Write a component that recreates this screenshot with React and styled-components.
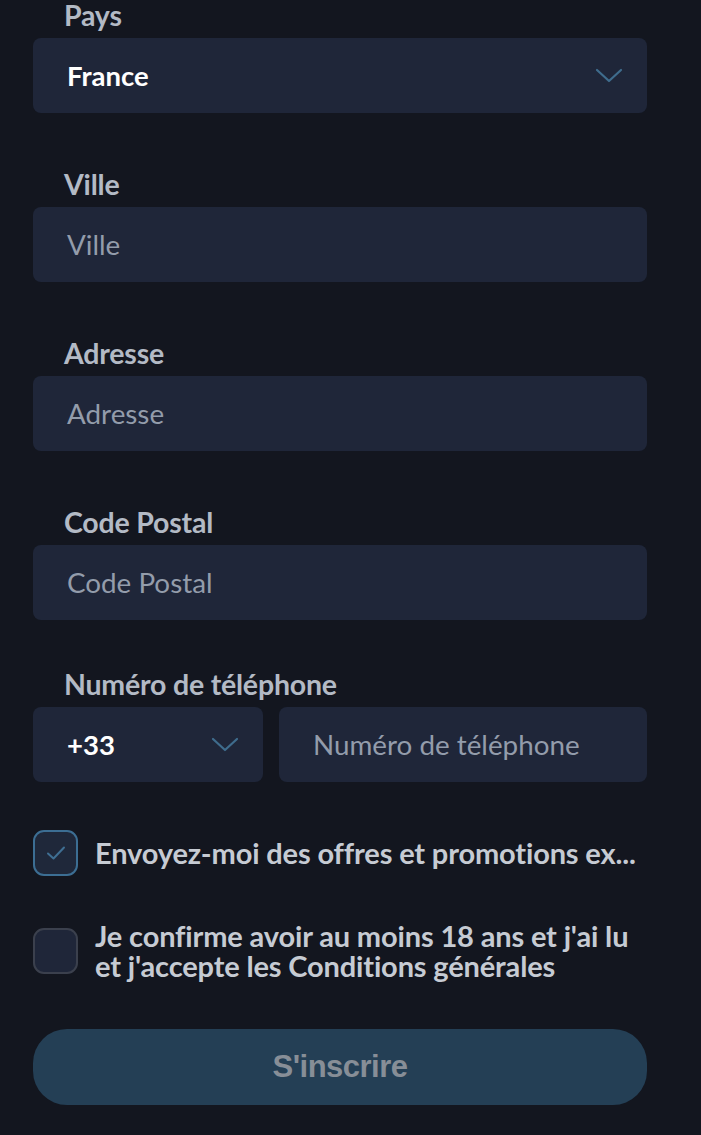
import React from "react";
import styled, { createGlobalStyle } from "styled-components";

const Global = createGlobalStyle`
  html, body {
    margin: 0;
    padding: 0;
    background: #13161f;
  }
  body {
    font-family: Lato, "Noto Sans", sans-serif;
  }
`;

const Page = styled.div`
  width: 701px;
  height: 1135px;
  overflow: hidden;
  background: #13161f;
`;

const Form = styled.form`
  display: flex;
  flex-direction: column;
  padding: 0 54px 0 33px;
  margin-top: -1px;
`;

const Field = styled.div`
  display: flex;
  flex-direction: column;
  gap: 7px;
  margin-bottom: ${(p) => p.$after || "55px"};
`;

const Label = styled.label`
  padding-left: 31px;
  font-size: 28.5px;
  line-height: 32px;
  font-weight: 700;
  color: #b3bac5;
  letter-spacing: -0.2px;
`;

const Box = styled.div`
  height: 75px;
  box-sizing: border-box;
  background: #1f2639;
  border-radius: 8px;
  display: flex;
  align-items: center;
  justify-content: space-between;
  padding: 0 24px 0 34px;
  flex: ${(p) => p.$flex || "none"};
`;

const Value = styled.span`
  font-size: 27.5px;
  font-weight: 700;
  color: #ffffff;
`;

const Placeholder = styled.span`
  font-size: 27.8px;
  font-weight: 400;
  color: #939cab;
`;

const Row = styled.div`
  display: flex;
  gap: 16px;
`;

const Chevron = () => (
  <svg width="28" height="16" viewBox="0 0 28 16" fill="none">
    <path d="M2 2 L14 13 L26 2" stroke="#3f6c8d" strokeWidth="2.2" strokeLinecap="round" strokeLinejoin="round" />
  </svg>
);

const Checks = styled.div`
  display: flex;
  flex-direction: column;
  gap: 45px;
  margin-top: -7px;
`;

const CheckRow = styled.div`
  display: flex;
  align-items: center;
  gap: 17px;
`;

const CheckBox = styled.span`
  width: 45px;
  height: 46px;
  flex: none;
  box-sizing: border-box;
  border-radius: 11px;
  border: 2px solid ${(p) => (p.$checked ? "#3c6e93" : "#3b404d")};
  background: ${(p) => (p.$checked ? "#1f283a" : "#1f2639")};
  display: flex;
  align-items: center;
  justify-content: center;
`;

const CheckText = styled.span`
  font-size: 29px;
  line-height: 29.5px;
  font-weight: 700;
  color: #c6cbd3;
  letter-spacing: -0.15px;
  white-space: nowrap;
`;

const Submit = styled.button`
  margin-top: 49px;
  height: 76px;
  border: none;
  border-radius: 34px;
  background: #243f55;
  color: #878e97;
  font-family: "Liberation Sans", Arial, sans-serif;
  font-size: 31px;
  font-weight: 700;
  letter-spacing: -0.5px;
`;

export default function App() {
  return (
    <Page>
      <Global />
      <Form>
        <Field>
          <Label>Pays</Label>
          <Box>
            <Value>France</Value>
            <Chevron />
          </Box>
        </Field>
        <Field>
          <Label>Ville</Label>
          <Box>
            <Placeholder>Ville</Placeholder>
          </Box>
        </Field>
        <Field>
          <Label>Adresse</Label>
          <Box>
            <Placeholder>Adresse</Placeholder>
          </Box>
        </Field>
        <Field $after="48px">
          <Label>Code Postal</Label>
          <Box>
            <Placeholder>Code Postal</Placeholder>
          </Box>
        </Field>
        <Field>
          <Label>Numéro de téléphone</Label>
          <Row>
            <Box $flex="0 0 230px">
              <Value>+33</Value>
              <Chevron />
            </Box>
            <Box $flex="1">
              <Placeholder>Numéro de téléphone</Placeholder>
            </Box>
          </Row>
        </Field>
        <Checks>
          <CheckRow>
            <CheckBox $checked>
              <svg width="20" height="16" viewBox="0 0 20 16" fill="none">
                <path d="M2 8.5 L7.5 13.5 L18 2.5" stroke="#3f6f93" strokeWidth="2" strokeLinecap="round" strokeLinejoin="round" />
              </svg>
            </CheckBox>
            <CheckText>Envoyez-moi des offres et promotions ex...</CheckText>
          </CheckRow>
          <CheckRow>
            <CheckBox />
            <CheckText>
              Je confirme avoir au moins 18 ans et j'ai lu
              <br />
              et j'accepte les Conditions générales
            </CheckText>
          </CheckRow>
        </Checks>
        <Submit type="button">S'inscrire</Submit>
      </Form>
    </Page>
  );
}
